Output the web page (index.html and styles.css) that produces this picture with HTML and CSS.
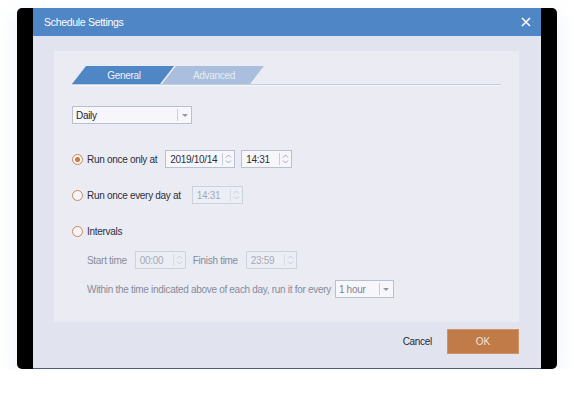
FILE: index.html
```html
<!DOCTYPE html>
<html lang="en">
<head>
    <meta charset="UTF-8">
    <meta name="viewport" content="width=device-width, initial-scale=1.0">
    <title>Schedule Settings</title>
    <link rel="stylesheet" href="styles.css">
</head>
<body>
    <div class="frame">
        <div class="dialog">
            <!-- Title bar -->
            <div class="titlebar">
                <span class="title">Schedule Settings</span>
                <svg class="close" width="10" height="10" viewBox="0 0 10 10">
                    <path d="M1 1 L9 9 M9 1 L1 9" stroke="#fff" stroke-width="1.6" fill="none"/>
                </svg>
            </div>
            <div class="body">
                <div class="panel">
                    <!-- Tabs -->
                    <div class="tabs">
                        <div class="tab active">General</div>
                        <div class="tab">Advanced</div>
                    </div>

                    <div class="select daily">
                        <span class="value">Daily</span>
                        <span class="drop"><span class="arrow"></span></span>
                    </div>

                    <!-- Run once -->
                    <div class="row first">
                        <span class="radio checked"></span>
                        <span class="label">Run once only at</span>
                        <div class="spin date">
                            <span class="value">2019/10/14</span>
                            <span class="btns">
                                <svg width="7" height="12" viewBox="0 0 7 12"><path d="M1 4.5 L3.5 2 L6 4.5 M1 7.5 L3.5 10 L6 7.5" stroke="#9aa6c0" fill="none"/></svg>
                            </span>
                        </div>
                        <div class="spin time">
                            <span class="value">14:31</span>
                            <span class="btns">
                                <svg width="7" height="12" viewBox="0 0 7 12"><path d="M1 4.5 L3.5 2 L6 4.5 M1 7.5 L3.5 10 L6 7.5" stroke="#9aa6c0" fill="none"/></svg>
                            </span>
                        </div>
                    </div>

                    <!-- Every day -->
                    <div class="row">
                        <span class="radio"></span>
                        <span class="label">Run once every day at</span>
                        <div class="spin time disabled wide-gap">
                            <span class="value">14:31</span>
                            <span class="btns">
                                <svg width="7" height="12" viewBox="0 0 7 12"><path d="M1 4.5 L3.5 2 L6 4.5 M1 7.5 L3.5 10 L6 7.5" stroke="#c8cedc" fill="none"/></svg>
                            </span>
                        </div>
                    </div>

                    <!-- Intervals -->
                    <div class="row">
                        <span class="radio"></span>
                        <span class="label">Intervals</span>
                    </div>

                    <div class="row sub">
                        <span class="label muted">Start time</span>
                        <div class="spin time disabled">
                            <span class="value">00:00</span>
                            <span class="btns">
                                <svg width="7" height="12" viewBox="0 0 7 12"><path d="M1 4.5 L3.5 2 L6 4.5 M1 7.5 L3.5 10 L6 7.5" stroke="#c8cedc" fill="none"/></svg>
                            </span>
                        </div>
                        <span class="label muted">Finish time</span>
                        <div class="spin time disabled">
                            <span class="value">23:59</span>
                            <span class="btns">
                                <svg width="7" height="12" viewBox="0 0 7 12"><path d="M1 4.5 L3.5 2 L6 4.5 M1 7.5 L3.5 10 L6 7.5" stroke="#c8cedc" fill="none"/></svg>
                            </span>
                        </div>
                    </div>

                    <div class="row sub">
                        <span class="label muted">Within the time indicated above of each day, run it for every</span>
                        <div class="select hour">
                            <span class="value">1 hour</span>
                            <span class="drop"><span class="arrow"></span></span>
                        </div>
                    </div>
                </div>

                <!-- Footer -->
                <div class="footer">
                    <span class="cancel">Cancel</span>
                    <button class="ok">OK</button>
                </div>
            </div>
        </div>
    </div>
</body>
</html>
```

FILE: styles.css
```css
body {
    margin: 0;
    background-color: #fff;
    font-family: "Liberation Sans", Arial, sans-serif;
    font-size: 10px;
    letter-spacing: -0.3px;
    color: #2b2f3b;
}
.frame {
    margin: 8px 0 0 17px;
    width: 540px;
    height: 361px;
    padding: 0 16px;
    box-sizing: border-box;
    background-color: #000;
    border-radius: 5px;
    box-shadow: 0 8px 22px rgba(90, 140, 210, 0.14);
}
.dialog {
    height: 100%;
    display: flex;
    flex-direction: column;
    background-color: #e1e4ee;
    border-bottom: 1px solid #4a5e80;
    box-sizing: border-box;
}
.titlebar {
    height: 28px;
    flex-shrink: 0;
    display: flex;
    align-items: center;
    justify-content: space-between;
    padding: 0 10px 0 11px;
    background-color: #4f86c5;
}
.title {
    color: #fff;
    font-size: 10.5px;
}
.close {
    display: block;
}
.body {
    flex: 1;
    padding: 15px 22px 0 21px;
}
.panel {
    height: 271px;
    box-sizing: border-box;
    padding: 15px 18px 0 18px;
    background-color: #ebebf4;
}

/* tabs */
.tabs {
    display: flex;
    height: 18px;
    border-bottom: 1px solid #c3cbdf;
    box-shadow: 0 1px 0 #f6f7fb;
}
.tab {
    width: 102px;
    height: 18px;
    display: flex;
    align-items: center;
    justify-content: center;
    padding-left: 2px;
    box-sizing: border-box;
    clip-path: polygon(14px 0, 100% 0, calc(100% - 14px) 100%, 0 100%);
    background-color: #a9bfdd;
    color: #e6ecf6;
}
.tab + .tab {
    margin-left: -12px;
}
.tab.active {
    background-color: #4f86c5;
    color: #eef3fa;
}

/* select boxes */
.select {
    display: flex;
    height: 18px;
    box-sizing: border-box;
    border: 1px solid #b7bfd3;
    background-color: #f7f7fb;
}
.select .value {
    flex: 1;
    display: flex;
    align-items: center;
    padding-left: 3px;
}
.select .drop {
    width: 13px;
    display: flex;
    align-items: center;
    justify-content: center;
    border-left: 1px solid #c6cddd;
    margin: 2px 0;
}
.arrow {
    width: 0;
    height: 0;
    border-left: 3px solid transparent;
    border-right: 3px solid transparent;
    border-top: 3px solid #8f97aa;
}
.daily {
    width: 120px;
    margin-top: 21px;
    color: #1f2330;
}
.hour {
    width: 59px;
    margin-left: 4px;
    color: #7d8292;
}

/* rows */
.row {
    display: flex;
    align-items: center;
    height: 18px;
    margin-top: 18px;
}
.row.first {
    margin-top: 26px;
}
.row.sub {
    margin-top: 11px;
    padding-left: 15px;
}
.radio {
    width: 11px;
    height: 11px;
    box-sizing: border-box;
    border: 1px solid #c98a5c;
    border-radius: 50%;
    background-color: #f5f4f6;
    margin-right: 4px;
    position: relative;
}
.radio.checked::after {
    content: "";
    position: absolute;
    left: 2px;
    top: 2px;
    width: 5px;
    height: 5px;
    border-radius: 50%;
    background-color: #c57a46;
}
.label {
    white-space: nowrap;
}
.label.muted {
    color: #878b99;
}

/* spin boxes */
.spin {
    display: flex;
    height: 18px;
    box-sizing: border-box;
    border: 1px solid #b7bfd3;
    background-color: #f7f7fb;
    margin-left: 8px;
}
.spin .value {
    flex: 1;
    display: flex;
    align-items: center;
    padding-left: 4px;
}
.spin .btns {
    width: 11px;
    display: flex;
    align-items: center;
    justify-content: center;
    border-left: 1px solid #c6cddd;
    margin: 2px 0;
}
.spin.date {
    width: 70px;
}
.spin.time {
    width: 51px;
}
.spin.date + .spin.time {
    margin-left: 6px;
}
.spin.disabled {
    border-color: #cdd2df;
    background-color: #eceef5;
    color: #a6aab6;
    margin-right: 7px;
}
.spin.disabled .btns {
    border-left-color: #d8dce6;
}
.wide-gap {
    margin-left: 11px;
}

/* footer */
.footer {
    display: flex;
    justify-content: flex-end;
    align-items: center;
    gap: 15px;
    padding-top: 7px;
}
.cancel {
    color: #262a36;
}
.ok {
    width: 72px;
    height: 25px;
    border: 1px solid #d09466;
    background-color: #c07b48;
    color: #f3e4d6;
    font-family: inherit;
    font-size: 10px;
    cursor: pointer;
}
```
